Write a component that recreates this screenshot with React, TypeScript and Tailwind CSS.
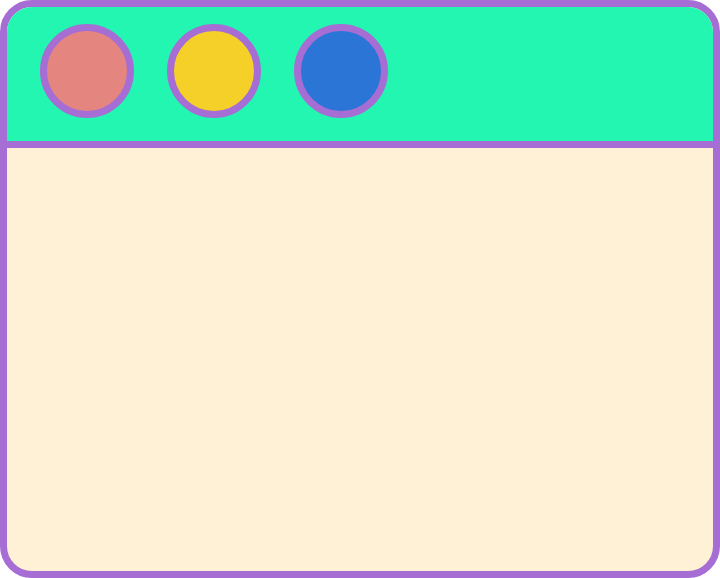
import React from 'react';

const dots = ['bg-[#e58580]', 'bg-[#f5d028]', 'bg-[#2a75d6]'];

const App: React.FC = () => {
  return (
    <div className="w-[720px] h-[578px] bg-white">
      <div className="w-full h-full flex flex-col border-[7px] border-[#a66dd4] rounded-[32px] overflow-hidden bg-[#fef1d6]">
        <div className="h-[141px] shrink-0 bg-[#23f6b1] border-b-[7px] border-[#a66dd4] flex items-start gap-[33px] pl-[33px] pt-[17px]">
          {dots.map((c) => (
            <div key={c} className={`w-[94px] h-[94px] rounded-full border-[7px] border-[#a66dd4] ${c}`} />
          ))}
        </div>
        <div className="flex-1" />
      </div>
    </div>
  );
};

export default App;
